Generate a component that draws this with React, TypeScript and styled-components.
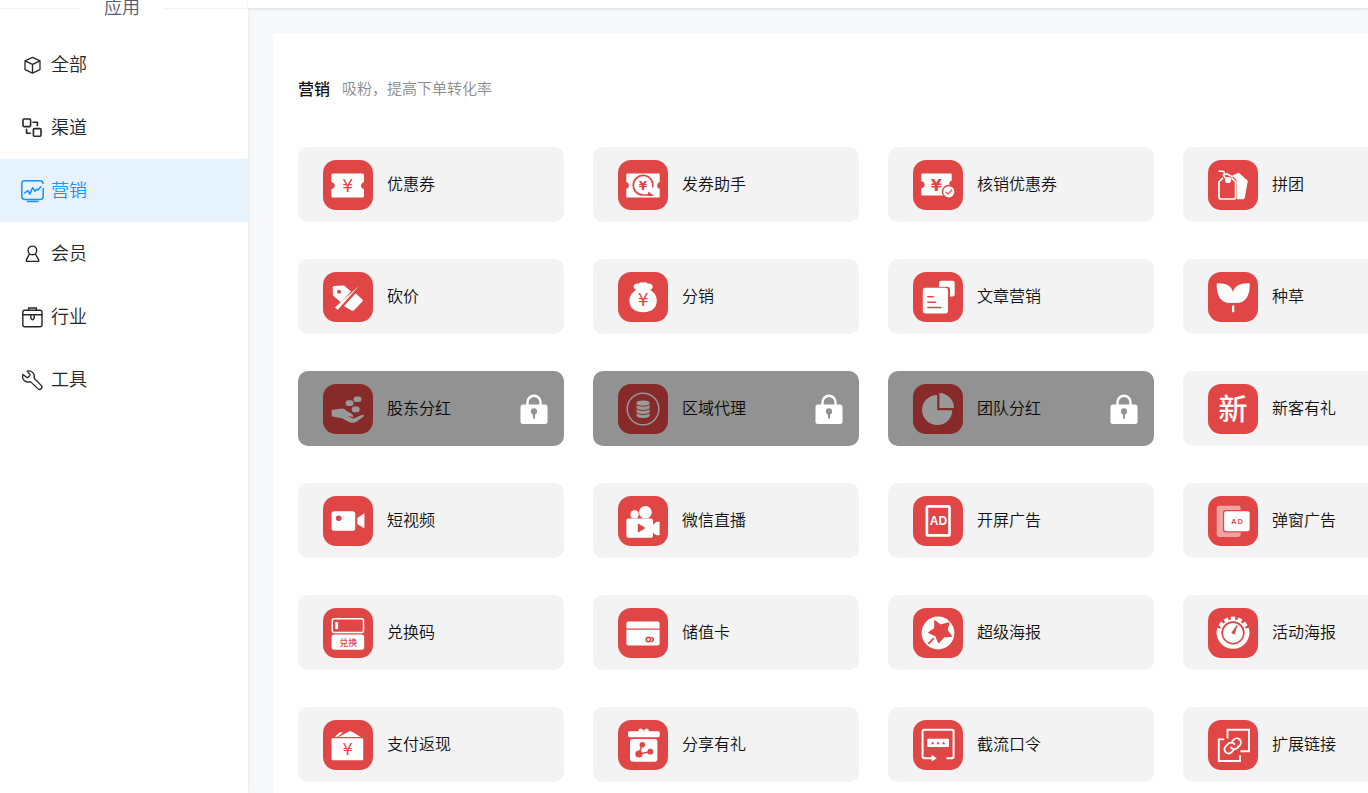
import React from "react";
import styled, { createGlobalStyle, css } from "styled-components";

const RED = "#e04646";
const FONT = '"Noto Sans CJK SC", "Microsoft YaHei", sans-serif';

const GlobalStyle = createGlobalStyle`
  *, *::before, *::after { box-sizing: border-box; }
  body {
    margin: 0;
    background: #f6f8fa;
    color: #1a1a1a;
    font-family: ${FONT};
    font-weight: 350;
  }
`;

const Layout = styled.div`
  display: flex;
  min-height: 100vh;
  overflow: hidden;
`;

const Sidebar = styled.aside`
  flex: 0 0 248px;
  background: #fff;
  box-shadow: 0 0 3px rgba(0, 21, 41, 0.1);
`;

const Label = styled.span`
  padding-bottom: 4px;
`;

const SidebarTitle = styled.h2`
  display: flex;
  align-items: center;
  gap: 24px;
  height: 16px;
  margin: 0 0 17px;
  color: #515a6e;
  font-size: 18px;
  font-weight: 350;
  line-height: 16px;

  &::before,
  &::after {
    content: "";
    height: 1px;
    background: #f0f1f3;
  }

  &::before {
    flex: 0 0 80px;
  }

  &::after {
    flex: 1;
  }
`;

const NavList = styled.ul`
  margin: 0;
  padding: 0;
  list-style: none;
`;

const NavLink = styled.a<{ $active?: boolean }>`
  display: flex;
  align-items: center;
  gap: 7px;
  height: 63px;
  padding-left: 20px;
  color: ${(p) => (p.$active ? "#1890ff" : "#262626")};
  background: ${(p) => (p.$active ? "#e6f3ff" : "transparent")};
  font-size: 18px;
  line-height: 28px;
  text-decoration: none;
`;

const NavIcon = styled.svg`
  flex: none;
  width: 24px;
  height: 24px;
  fill: none;
  stroke: currentColor;
  stroke-linejoin: round;
  stroke-linecap: round;
`;

const Content = styled.div`
  flex: 1;
  min-width: 0;
  display: flex;
  flex-direction: column;
`;

const TopBar = styled.header`
  height: 8px;
  background: #fff;
  box-shadow: 0 1px 3px rgba(0, 21, 41, 0.12);
`;

const Panel = styled.main`
  flex: 1;
  margin: 25px 0 0 25px;
  padding: 43px 0 8px 25px;
  background: #fff;
`;

const SectionHead = styled.div`
  display: flex;
  align-items: center;
  gap: 12px;
  height: 24px;
  margin-bottom: 47px;
`;

const SectionTitle = styled.h1`
  margin: 0;
  color: #111;
  font-size: 16px;
  font-weight: 500;
  line-height: 24px;
`;

const SectionNote = styled.p`
  margin: 0;
  color: #8c8c8c;
  font-size: 15px;
  line-height: 24px;
`;

const Grid = styled.div`
  display: grid;
  grid-template-columns: repeat(4, minmax(266px, 1fr));
  gap: 37px 29px;
`;

const Card = styled.a<{ $locked?: boolean }>`
  position: relative;
  display: flex;
  align-items: center;
  gap: 14px;
  height: 75px;
  padding: 0 25px;
  border-radius: 10px;
  overflow: hidden;
  background: #f3f3f3;
  color: #111;
  font-size: 16px;
  line-height: 24px;
  text-decoration: none;
  ${(p) =>
    p.$locked &&
    css`
      cursor: not-allowed;
    `}
`;

const LockCover = styled.span`
  position: absolute;
  inset: 0;
  display: flex;
  align-items: center;
  justify-content: flex-end;
  padding-right: 16px;
  background: rgba(0, 0, 0, 0.4);
`;

const Tile = styled.svg`
  flex: none;
  width: 50px;
  height: 50px;
  border-radius: 13px;
  background: ${RED};
  fill: #fff;
  stroke-linejoin: round;
`;

const Glyph = styled.text<{ $size: number; $weight?: number; $red?: boolean }>`
  font-family: "Liberation Sans", ${FONT};
  font-size: ${(p) => p.$size}px;
  font-weight: ${(p) => p.$weight ?? 400};
  fill: ${(p) => (p.$red ? RED : "#fff")};
  text-anchor: middle;
`;

const Yuan = styled(Glyph)`
  font-family: "DejaVu Sans", sans-serif;
`;

const Lock = () => (
  <svg width="28" height="30" viewBox="0 0 28 30" aria-label="未开通" role="img">
    <path d="M7.5 12V8.3a6.5 6.5 0 0 1 13 0V12" fill="none" stroke="#fff" strokeWidth="2.4" />
    <rect x="0.5" y="10.5" width="27" height="19.5" rx="2.5" fill="#fff" />
    <circle cx="14" cy="17.4" r="3.1" fill="#929292" />
    <path d="M14 17v7.5" stroke="#929292" strokeWidth="2" />
  </svg>
);

const teeth = [-54, -27, 0, 27, 54];

const icons: Record<string, React.ReactNode> = {
  coupon: (
    <>
      <path d="M10 13.5H39.5Q41 13.5 41 15V22L38.8 23.2Q37.2 25.6 38.8 28L41 29.2V36Q41 37.6 39.5 37.6H10Q8.4 37.6 8.4 36V29.2L10.8 28Q12.8 25.6 10.8 23.2L8.4 22V15Q8.4 13.5 10 13.5Z" />
      <Yuan x="24.7" y="31.8" $size={17} $red>¥</Yuan>
    </>
  ),
  sendCoupon: (
    <>
      <path d="M9.5 13.4H40.5Q41.7 13.4 41.7 14.6V22A3.5 3.5 0 0 0 41.7 28.8V36.4Q41.7 37.6 40.5 37.6H9.5Q8.3 37.6 8.3 36.4V28.8A3.5 3.5 0 0 0 8.3 22V14.6Q8.3 13.4 9.5 13.4Z" />
      <path d="M34.6 27.5A9.8 9.8 0 1 0 25 35H33" fill="none" stroke={RED} strokeWidth="1.7" />
      <path d="M30.5 31.4L36 35.9H29.5Z" fill={RED} />
      <Yuan x="25" y="29.8" $size={12} $weight={700} $red>¥</Yuan>
    </>
  ),
  verifyCoupon: (
    <>
      <path d="M9.5 13.4H37.5Q38.7 13.4 38.7 14.6V20.6A3.3 3.3 0 0 0 38.7 27V35.4H9.5Q8.3 35.4 8.3 34.2V28A3.3 3.3 0 0 0 8.3 21.4V14.6Q8.3 13.4 9.5 13.4Z" />
      <Yuan x="23.4" y="31.2" $size={16} $weight={700} $red>¥</Yuan>
      <circle cx="35.8" cy="31.8" r="7" fill={RED} />
      <circle cx="35.8" cy="31.8" r="5.6" />
      <path d="M32.6 31.8L35 34.2L39.2 29.6" fill="none" stroke={RED} strokeWidth="1.2" />
    </>
  ),
  group: (
    <>
      <path d="M24.2 15.4L30.8 12.8L39.8 20.8L36.8 38L35.4 39.2H28.8V20.5Z" />
      <path d="M15 17.8L11 21.8V37Q11 39 13 39H25.6Q27.6 39 27.6 37V21.8L23.5 17.8" fill="none" stroke="#fff" strokeWidth="1.7" />
      <path d="M10.5 11.2H14.2Q16.6 11.2 16.2 13.5L15.7 15.6Q16.8 18.4 20 19.6M14.7 15.5L19 13.8L24.5 17" fill="none" stroke="#fff" strokeWidth="1.5" />
      <circle cx="20" cy="20" r="3.1" />
    </>
  ),
  bargain: (
    <>
      <path d="M11 14L21.2 13.6L28.4 20L18 30.6L9.8 23.2V15.2Z" />
      <circle cx="16" cy="19.8" r="2" fill={RED} />
      <path d="M32.6 21.2L39.3 27.4Q40.4 28.4 39.4 29.6L31 38.2Q29.8 39.3 28.4 38.6L20.5 33.8Z" />
      <path d="M35.6 14.2L14.5 38" stroke={RED} strokeWidth="4.6" />
      <path d="M35.6 14.2L14.6 37.9L12 35.6Z" />
    </>
  ),
  distribution: (
    <>
      <path d="M18.2 18Q14.8 16.4 15.8 13.6Q17 11 20.4 11.8Q22 9.6 25.2 10.6Q28.4 9.6 30 11.8Q33.4 11 34.6 13.8Q35.2 16.6 32 18L30 20H20.4Z" />
      <path d="M19.8 17H30.6Q38.8 21 38.8 28.6Q38.4 40 25.2 40.2Q11.8 40 11.4 28.6Q11.4 21 19.8 17Z" />
      <Yuan x="25.2" y="34" $size={17} $red>¥</Yuan>
    </>
  ),
  article: (
    <>
      <path d="M26 15V11Q26 8.8 28.2 8.8H39.5Q41.7 8.8 41.7 11V22.4Q41.7 24.4 39.7 24.4H37V18Q37 14.8 34 14.8Z" />
      <rect x="9.8" y="15.8" width="25.2" height="25.6" rx="2.6" />
      <path d="M14.3 24.8H20.8M14.3 30.3H23.2M14.3 35.5H28.3" stroke={RED} strokeWidth="1.5" />
    </>
  ),
  seed: (
    <>
      <path d="M8.7 11.4C17.4 10.8 24 14 25 20.4C26 14 33 10.8 41.7 11.4C42.2 23.6 37.4 31 28.4 31H22C13 31 8.3 23.6 8.7 11.4Z" />
      <rect x="24" y="33.4" width="2.3" height="6.8" />
    </>
  ),
  newGift: <Glyph x="25" y="36" $size={29} $weight={500}>新</Glyph>,
  dividend: (
    <>
      <rect x="30.6" y="12.4" width="7.8" height="5.6" rx="2.5" />
      <rect x="22.6" y="16.2" width="7.8" height="5.8" rx="2.5" />
      <rect x="28.8" y="22.4" width="7.8" height="5.8" rx="2.5" />
      <path d="M8.7 26L19 24.4Q21.4 24.4 23.4 26.8L28.2 29.4Q31 31.4 30 33L24.8 32L29.6 34.4Q31.6 34.6 33.4 33.2L39.4 30.8Q41.8 30.6 40.6 32.4L33.6 37.8Q30.6 39.4 27 38.6L19.6 34.6L8.7 32.2Z" />
    </>
  ),
  region: (
    <>
      <circle cx="25" cy="25" r="15.8" fill="none" stroke="#fff" strokeWidth="1.5" />
      <path d="M18.6 18.6C18.6 15.8 31.6 15.8 31.6 18.6V31.8C31.6 34.8 18.6 34.8 18.6 31.8Z" />
      <path d="M18 20.6Q25 24 32.2 20.6M18 24.8Q25 28.2 32.2 24.8M18 28.8Q25 32.4 32.2 28.8" fill="none" stroke={RED} strokeWidth="0.9" />
    </>
  ),
  team: (
    <>
      <path d="M24.2 10.9V26.2H39.3A15.1 15.1 0 1 1 24.2 10.9Z" />
      <path d="M26.4 8.9A15 15 0 0 1 41 24H26.4Z" />
    </>
  ),
  video: (
    <>
      <rect x="8.6" y="15.2" width="23.6" height="19.6" rx="2.6" />
      <circle cx="15.7" cy="22.2" r="2.8" fill={RED} />
      <path d="M34.3 22L41.4 17.2V32.4L34.3 28Z" />
    </>
  ),
  live: (
    <>
      <circle cx="16.6" cy="18.4" r="4.1" />
      <circle cx="27.4" cy="16.2" r="6.3" />
      <rect x="8.4" y="22.6" width="26.6" height="19.2" rx="2" />
      <path d="M34 29.5L38.5 25.8H41.6V39.2H38.5L34 36Z" />
      <path d="M19.8 27.2L27.6 32L19.8 36.8Z" fill={RED} />
    </>
  ),
  splashAd: (
    <>
      <rect x="13.9" y="10.4" width="22.6" height="29" rx="1.5" fill="none" stroke="#fff" strokeWidth="2.7" />
      <Glyph x="25.4" y="29.4" $size={12} $weight={700}>AD</Glyph>
    </>
  ),
  popupAd: (
    <>
      <rect x="8.7" y="9.8" width="24" height="31.2" rx="2.4" fillOpacity="0.5" />
      <rect x="15" y="14" width="27.6" height="22.4" rx="2.6" fill={RED} />
      <rect x="16.2" y="15.2" width="25.4" height="20" rx="2" />
      <Glyph x="25.8" y="27.7" $size={7} $weight={700} $red>A</Glyph>
      <Glyph x="32.2" y="27.7" $size={7} $weight={700} $red>D</Glyph>
    </>
  ),
  redeem: (
    <>
      <rect x="9.3" y="10.8" width="31.2" height="13.6" rx="2" fill="none" stroke="#fff" strokeWidth="1.5" />
      <rect x="12.3" y="14" width="2.8" height="7.2" rx="0.6" />
      <rect x="8.6" y="26.6" width="32.6" height="15.2" rx="2.4" />
      <Glyph x="25.2" y="37.8" $size={9} $weight={500} $red>兑换</Glyph>
    </>
  ),
  storedCard: (
    <>
      <rect x="8.4" y="13.4" width="33.2" height="24.2" rx="2" />
      <path d="M8 21.2H42" stroke={RED} strokeWidth="1.3" />
      <circle cx="30.4" cy="31.6" r="2.2" fill="none" stroke={RED} strokeWidth="1.6" />
      <path d="M33.4 29.2Q37.4 31.6 33.4 34" fill="none" stroke={RED} strokeWidth="1.6" />
    </>
  ),
  superPoster: (
    <>
      <circle cx="25" cy="25" r="16.4" />
      <path d="M21.8 12.6L27.6 17.2L36 14.8L34 22L38.4 28.2L31 28.8L25.6 34.6L22.8 28L15.8 24.6L21.8 20.6Z" fill={RED} stroke={RED} strokeWidth="1.2" />
      <path d="M20.8 30.2L15.4 35.8" stroke={RED} strokeWidth="1.8" />
    </>
  ),
  eventPoster: (
    <>
      <path d="M11.6 20.4A14 14 0 1 0 38.4 20.4" fill="none" stroke="#fff" strokeWidth="4.8" />
      <circle cx="25" cy="25" r="12.6" fill="none" stroke="#fff" strokeWidth="1.6" />
      {teeth.map((angle) => (
        <rect key={angle} x="22.8" y="8.6" width="4.4" height="4.4" transform={`rotate(${angle} 25 25)`} />
      ))}
      <circle cx="25" cy="25" r="11.4" fill={RED} />
      <circle cx="25" cy="25" r="10" />
      <path d="M29 17.2L26.4 26.2L23.8 24.8Z" fill={RED} stroke={RED} strokeWidth="0.8" />
    </>
  ),
  cashback: (
    <>
      <path d="M11.6 16.8L16.6 12.4L20.2 12.2L15 16.8Z" />
      <path d="M15.8 17L26.8 11L29.6 12L37.6 17Z" />
      <rect x="8.6" y="18.2" width="31.6" height="22" rx="1" />
      <Yuan x="24.5" y="35.2" $size={16} $red>¥</Yuan>
    </>
  ),
  shareGift: (
    <>
      <path d="M20.4 11.6Q20.4 8.6 22.6 8.6Q24.6 8.8 25.6 10.8Q26.8 8.8 28.8 8.6Q31 8.8 31 11.6Z" />
      <rect x="10" y="11.2" width="31.7" height="6" rx="1.6" />
      <rect x="12" y="19" width="27.4" height="22.8" rx="3" />
      <path d="M24.3 24.7L20.7 34L32.3 31.7" fill="none" stroke={RED} strokeWidth="1.5" />
      <circle cx="24.3" cy="24.7" r="2.8" fill={RED} />
      <circle cx="20.9" cy="34" r="3.6" fill={RED} />
      <circle cx="32.3" cy="31.7" r="2.9" fill={RED} />
    </>
  ),
  intercept: (
    <>
      <path d="M19.5 38.2H11.2Q9.6 38.2 9.6 36.6V11.4Q9.6 9.8 11.2 9.8H39Q40.6 9.8 40.6 11.4V36.6Q40.6 38.2 39 38.2H33.4" fill="none" stroke="#fff" strokeWidth="2" />
      <path d="M18.6 34.8L23.8 38.2L18.6 41.6Z" />
      <rect x="14.2" y="18.8" width="21.8" height="8.2" rx="1" />
      <path d="M18 24.2L19.6 21.6L21.2 24.2ZM23.5 24.2L25.1 21.6L26.7 24.2ZM29 24.2L30.6 21.6L32.2 24.2Z" fill={RED} />
    </>
  ),
  link: (
    <g fill="none" stroke="#fff" strokeWidth="1.9">
      <path d="M19.5 18.6V9.8H41V31.2H32.4" strokeLinejoin="miter" />
      <path d="M16.2 19.4H10.8V41H32V35.2" strokeLinejoin="miter" />
      <g strokeLinecap="round">
        <path d="M23 27.6a4.2 4.2 0 0 0 6.2.4l2.5-2.6a4.1 4.1 0 0 0-5.9-5.8l-1.5 1.5" />
        <path d="M26.4 24.2a4.2 4.2 0 0 0-6.2-.4l-2.5 2.6a4.1 4.1 0 0 0 5.9 5.8l1.5-1.5" />
      </g>
    </g>
  ),
};

const navItems = [
  {
    label: "全部",
    icon: <path strokeWidth="1.3" d="M12.5 4.4L20 7.8V16.6L12.5 20.2L5 16.6V7.8ZM5 7.8L12.5 11.4L20 7.8M12.5 11.4V20.2" />,
  },
  {
    label: "渠道",
    icon: (
      <g strokeWidth="1.6">
        <rect x="3" y="3" width="7.6" height="7.6" rx="1" />
        <rect x="13.4" y="12.6" width="7.6" height="7.6" rx="1" />
        <path d="M13 6.2H17.4V9.8M6.6 13.4V17.2H10.4" />
      </g>
    ),
  },
  {
    label: "营销",
    active: true,
    icon: (
      <g strokeWidth="1.5">
        <path d="M23 4.4Q22.6 1.8 20 1.8H4.6Q1.8 1.8 1.8 4.6V17.6Q1.8 20.4 4.6 20.4H20.4Q23.2 20.4 23.2 17.6V9.4M7.4 22.6H18" />
        <path d="M4.6 14L8 11.6L9.8 15.2L12.6 8.6L15 12.4L16.6 10.2L18 11L20.8 7.8" />
      </g>
    ),
  },
  {
    label: "会员",
    icon: (
      <g strokeWidth="1.4">
        <circle cx="12.4" cy="8.4" r="4.3" />
        <path d="M9.4 12.2L6.4 17.6V19.4H18.6V17.6L15.4 12.2" />
      </g>
    ),
  },
  {
    label: "行业",
    icon: (
      <g strokeWidth="1.4">
        <rect x="2.8" y="5.2" width="19.2" height="16.6" rx="2" />
        <path d="M8.6 5V3H16.4V5M2.8 9.8H22M10.8 9.8V13.2Q12.5 16.4 14.2 13.2V9.8" />
      </g>
    ),
  },
  {
    label: "工具",
    icon: (
      <path
        strokeWidth="1.3"
        d="M9.8 6.3a1 1 0 0 1 0 1.4L8 9.3a1 1 0 0 1-1.4 0L3 6.4a5.6 5.6 0 0 0 7.4 7.2l7.4 7a2.1 2.1 0 0 0 3.4-3.2l-7-7.2A5.6 5.6 0 0 0 7.2 3.2Z"
      />
    ),
  },
];

const apps: { name: string; icon: string; locked?: boolean }[] = [
  { name: "优惠券", icon: "coupon" },
  { name: "发券助手", icon: "sendCoupon" },
  { name: "核销优惠券", icon: "verifyCoupon" },
  { name: "拼团", icon: "group" },
  { name: "砍价", icon: "bargain" },
  { name: "分销", icon: "distribution" },
  { name: "文章营销", icon: "article" },
  { name: "种草", icon: "seed" },
  { name: "股东分红", icon: "dividend", locked: true },
  { name: "区域代理", icon: "region", locked: true },
  { name: "团队分红", icon: "team", locked: true },
  { name: "新客有礼", icon: "newGift" },
  { name: "短视频", icon: "video" },
  { name: "微信直播", icon: "live" },
  { name: "开屏广告", icon: "splashAd" },
  { name: "弹窗广告", icon: "popupAd" },
  { name: "兑换码", icon: "redeem" },
  { name: "储值卡", icon: "storedCard" },
  { name: "超级海报", icon: "superPoster" },
  { name: "活动海报", icon: "eventPoster" },
  { name: "支付返现", icon: "cashback" },
  { name: "分享有礼", icon: "shareGift" },
  { name: "截流口令", icon: "intercept" },
  { name: "扩展链接", icon: "link" },
];

export default function App() {
  return (
    <>
      <GlobalStyle />
      <Layout>
        <Sidebar>
          <SidebarTitle>
            <Label>应用</Label>
          </SidebarTitle>
          <nav>
            <NavList>
              {navItems.map((item) => (
                <li key={item.label}>
                  <NavLink href="#" $active={item.active} aria-current={item.active ? "page" : undefined}>
                    <NavIcon viewBox="0 0 24 24" aria-hidden="true">{item.icon}</NavIcon>
                    <Label>{item.label}</Label>
                  </NavLink>
                </li>
              ))}
            </NavList>
          </nav>
        </Sidebar>
        <Content>
          <TopBar />
          <Panel>
            <SectionHead>
              <SectionTitle>营销</SectionTitle>
              <SectionNote>吸粉，提高下单转化率</SectionNote>
            </SectionHead>
            <Grid>
              {apps.map((app) => (
                <Card key={app.name} href="#" $locked={app.locked} aria-disabled={app.locked}>
                  <Tile viewBox="0 0 50 50" aria-hidden="true">{icons[app.icon]}</Tile>
                  <Label>{app.name}</Label>
                  {app.locked && (
                    <LockCover>
                      <Lock />
                    </LockCover>
                  )}
                </Card>
              ))}
            </Grid>
          </Panel>
        </Content>
      </Layout>
    </>
  );
}
